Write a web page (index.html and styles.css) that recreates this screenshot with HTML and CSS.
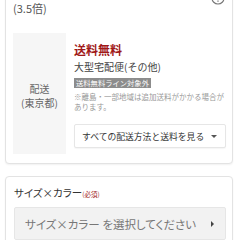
FILE: index.html
```html
<!DOCTYPE html>
<html lang="ja">
<head>
<meta charset="utf-8">
<link rel="stylesheet" href="styles.css">
</head>
<body>
<div class="page">
  <section class="card card-top">
    <div class="point-row">
      <span class="point-text">(3.5倍)</span>
      <svg class="help-icon" width="14" height="14" viewBox="0 0 14 14"><circle cx="7" cy="7" r="6" fill="none" stroke="#777" stroke-width="1.2"/><path d="M7 9.5v1.2" stroke="#777" stroke-width="1.3"/></svg>
    </div>
    <div class="shipping">
      <div class="ship-label">
        <span>配送</span>
        <span>(東京都)</span>
      </div>
      <div class="ship-body">
        <div class="free">送料無料</div>
        <div class="method">大型宅配便(その他)</div>
        <span class="badge">送料無料ライン対象外</span>
        <p class="note">※離島・一部地域は追加送料がかかる場合があります。</p>
        <button class="all-btn"><span class="btn-text">すべての配送方法と送料を見る</span><span class="caret-down"></span></button>
      </div>
    </div>
  </section>
  <section class="card card-opt">
    <div class="opt-title">サイズ×カラー<span class="req">(必須)</span></div>
    <button class="select-btn"><span class="btn-text select-text">サイズ×カラー を選択してください</span><span class="caret-right"></span></button>
  </section>
</div>
</body>
</html>
```

FILE: styles.css
```css
* { box-sizing: border-box; }
html, body { margin: 0; padding: 0; background: #fff; }
body {
  font-family: "Noto Sans CJK JP", "Noto Sans", sans-serif;
  color: #333;
  width: 240px;
  height: 240px;
  overflow: hidden;
}
.page {
  display: flex;
  flex-direction: column;
  gap: 12px;
  padding: 0 7px 0 5px;
  margin-top: -14px;
}
.card {
  border: 1px solid #e3e3e3;
  border-radius: 4px;
  background: #fff;
  box-shadow: 0 1px 2px rgba(0,0,0,0.06);
}
.card-top {
  padding: 12px 6px 9px 7px;
}
.point-row {
  display: flex;
  justify-content: space-between;
  align-items: flex-start;
  height: 34px;
}
.point-text {
  font-size: 11px;
  line-height: 14px;
  margin-top: 2px;
  color: #555;
}
.help-icon {
  margin-top: -8px;
  margin-right: 1px;
}
.shipping {
  display: flex;
}
.ship-label {
  width: 53px;
  background: #f6f6f6;
  display: flex;
  flex-direction: column;
  align-items: center;
  justify-content: center;
  font-size: 10px;
  line-height: 14px;
  color: #666;
  padding-top: 4px;
}
.ship-body {
  flex: 1;
  padding: 9px 0 6px 8px;
  display: flex;
  flex-direction: column;
  align-items: flex-start;
}
.free {
  font-size: 12px;
  font-weight: bold;
  color: #a01818;
  line-height: 15px;
}
.method {
  font-size: 10px;
  line-height: 13px;
  margin-top: 3px;
  color: #444;
}
.badge {
  margin-top: 5px;
  background: #8c8c8c;
  color: #fff;
  font-size: 7.3px;
  line-height: 10px;
  padding: 0 2px;
}
.note {
  margin: 4px 0 0;
  font-size: 7.5px;
  line-height: 10px;
  color: #999;
}
.btn-text {
  white-space: nowrap;
}
.select-text {
  font-feature-settings: "palt";
}
.all-btn {
  margin-top: 12px;
  width: 100%;
  height: 24px;
  border: 1px solid #e6e6e6;
  background: #fff;
  border-radius: 2px;
  display: flex;
  align-items: center;
  justify-content: space-between;
  padding: 0 8px 0 7px;
  font-family: inherit;
  font-size: 8.8px;
  color: #333;
  box-shadow: 0 1px 1px rgba(0,0,0,0.04);
}
.caret-down {
  width: 0; height: 0;
  border-left: 3px solid transparent;
  border-right: 3px solid transparent;
  border-top: 3px solid #555;
}
.card-opt {
  padding: 9px 6px 10px 8px;
}
.opt-title {
  font-size: 10.5px;
  line-height: 14px;
  color: #333;
  font-feature-settings: "palt";
}
.req {
  font-size: 6.5px;
  color: #a01818;
}
.select-btn {
  margin-top: 6px;
  width: 100%;
  height: 33px;
  background: #f2f2f2;
  border: 1px solid #e6e6e6;
  border-radius: 2px;
  display: flex;
  align-items: center;
  justify-content: space-between;
  padding: 0 11px 0 10px;
  font-family: inherit;
  font-size: 11.5px;
  color: #777;
}
.caret-right {
  width: 0; height: 0;
  border-top: 3px solid transparent;
  border-bottom: 3px solid transparent;
  border-left: 3px solid #444;
}
```
